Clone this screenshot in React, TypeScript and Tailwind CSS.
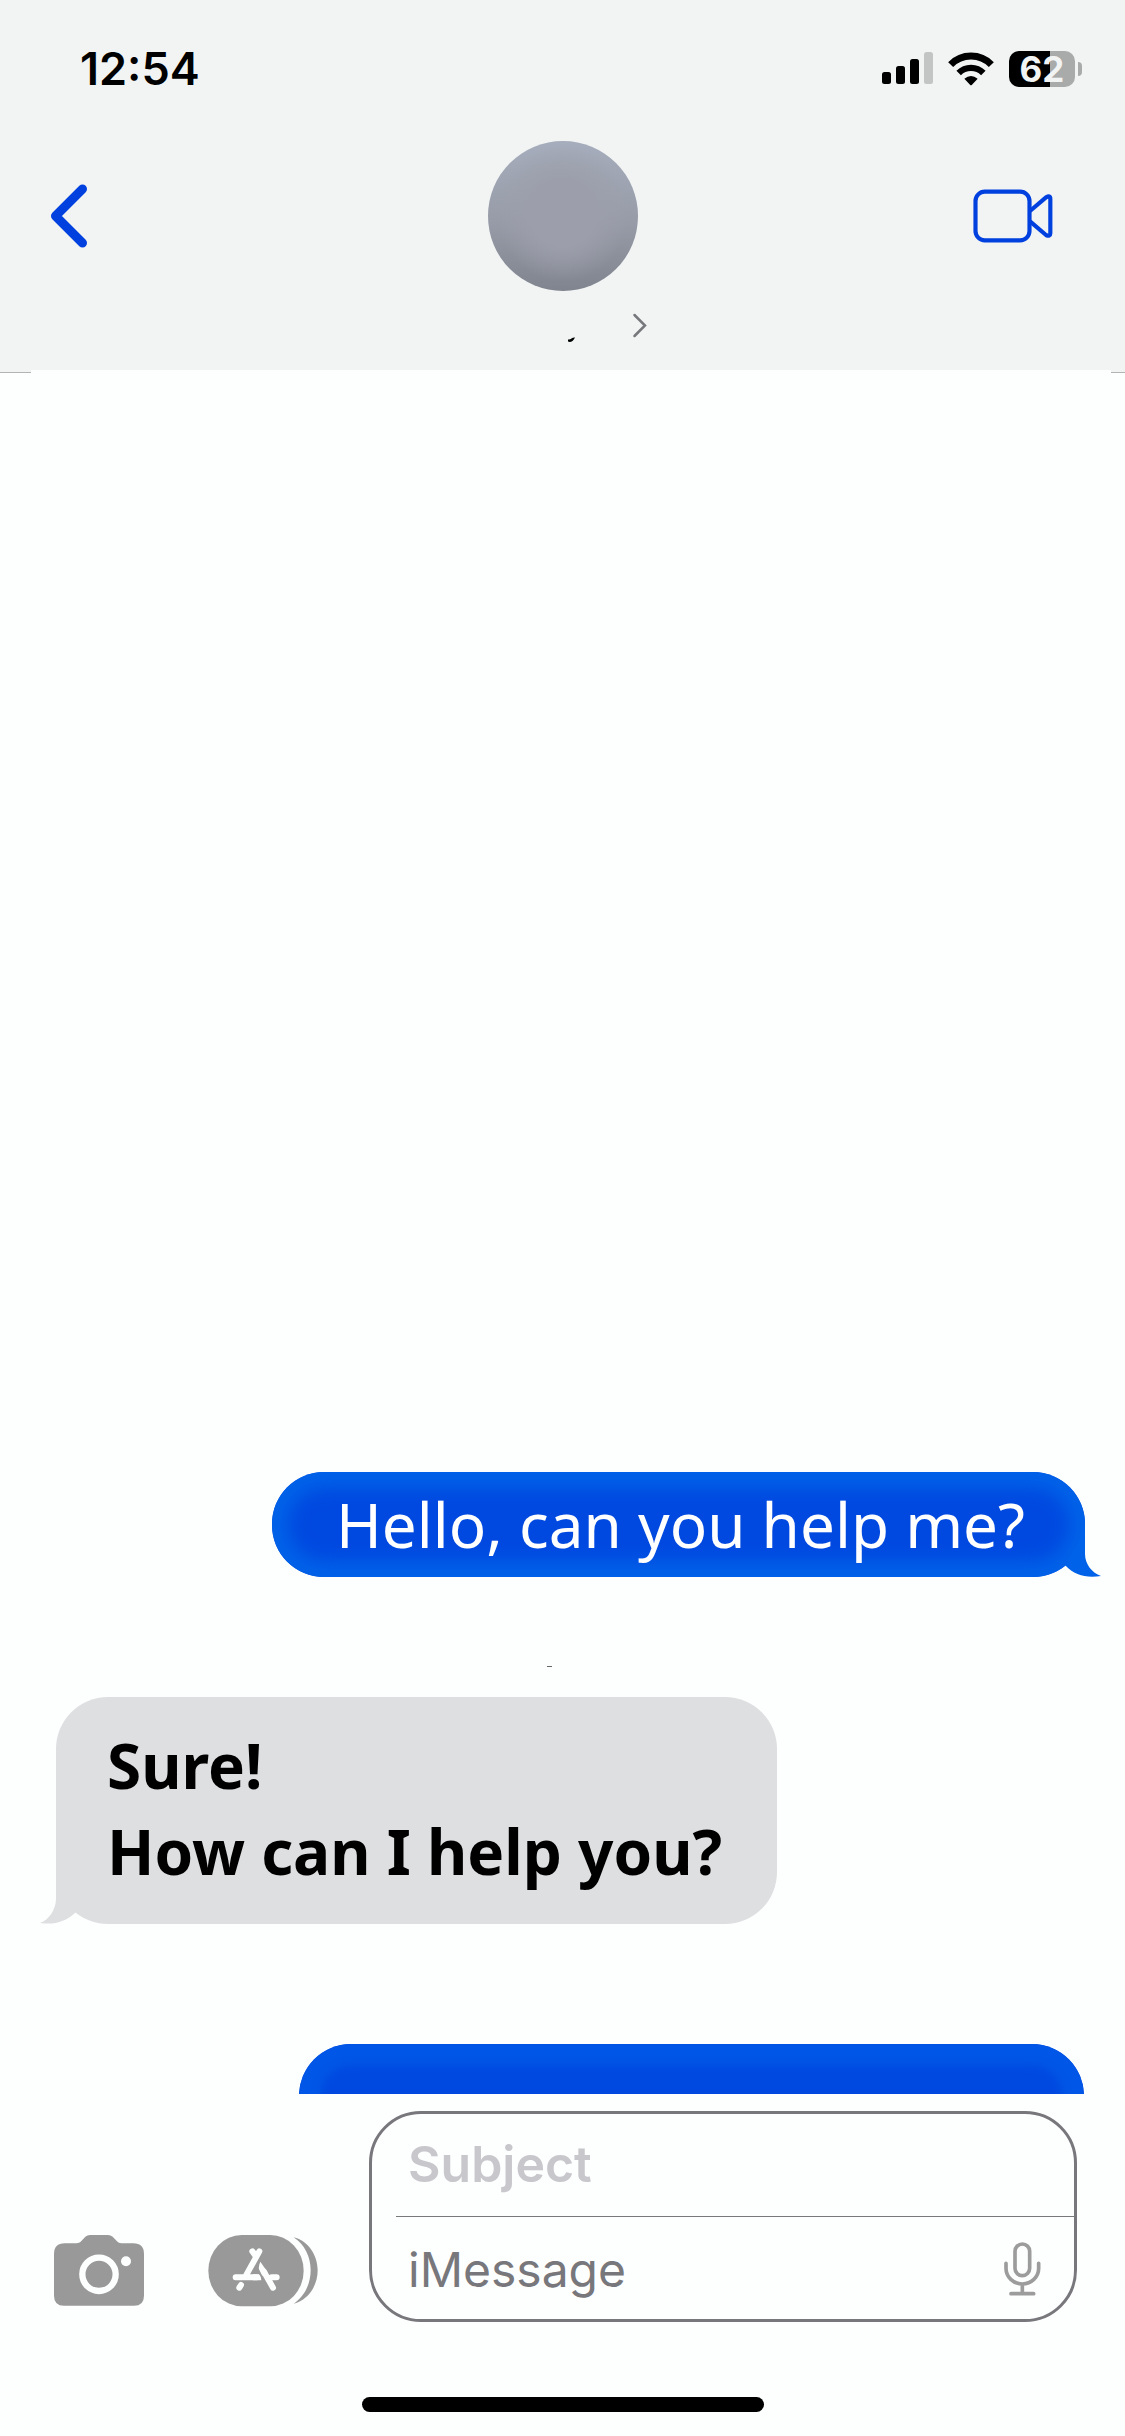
import type { ReactNode } from 'react';

function SignalIcon() {
  return (
    <svg width="51" height="33" viewBox="0 0 51 33" aria-hidden="true">
      <rect x="0" y="20" width="9" height="12" rx="2.5" />
      <rect x="14" y="14" width="9" height="18" rx="2.5" />
      <rect x="28" y="7" width="9" height="25" rx="2.5" />
      <rect x="42" y="0" width="9" height="32" rx="2.5" fill="#c3c4c4" />
    </svg>
  );
}

function WifiIcon() {
  return (
    <svg width="46" height="34" viewBox="324 94 138 102" aria-hidden="true">
      <path d="M332 132A85 85 0 0 1 454 132" fill="none" stroke="#000" strokeWidth="21" />
      <path d="M356 157A52 52 0 0 1 430 157" fill="none" stroke="#000" strokeWidth="19" />
      <path d="M373 174Q393 158 413 174L396 192Q393 196 390 192Z" />
    </svg>
  );
}

function Battery({ level }: { level: number }) {
  return (
    <div className="flex items-center gap-[3px]">
      <div
        className="h-9 w-[66px] rounded-[10px] text-center text-[35px] leading-9 font-bold text-[#f2f4f4]"
        style={{ background: `linear-gradient(to right, #000 ${level}%, #a9aaaa ${level}%)` }}
      >
        {level}
      </div>
      <div className="h-[14px] w-1 rounded-r-full bg-[#a9aaaa]" />
    </div>
  );
}

function BackIcon() {
  return (
    <svg width="38" height="64" viewBox="0 0 38 64" fill="none" stroke="#0040df" strokeWidth="9" strokeLinecap="round" strokeLinejoin="round" aria-hidden="true">
      <path d="M32.500 5L5.500 32L32.500 59" />
    </svg>
  );
}

function VideoIcon() {
  return (
    <svg width="80" height="54" viewBox="398 506 240 162" fill="none" stroke="#0040df" strokeWidth="12.500" strokeLinejoin="round" aria-hidden="true">
      <rect x="405.500" y="514" width="162" height="146" rx="28" />
      <path d="M569 572L617 531Q630 524 630 535V639Q630 650 617 644L569 603" />
    </svg>
  );
}

function CameraIcon() {
  return (
    <svg width="90" height="71" viewBox="102 104 270 213" aria-hidden="true">
      <path
        fill="#999"
        d="M134 129H170Q178 128 182 124L196 109Q202 104 210 104H264Q272 104 278 109L291 123Q296 129 304 129H340Q372 129 372 161V286Q372 316 342 316H132Q102 316 102 286V161Q102 129 134 129Z"
      />
      <circle cx="237" cy="222" r="50" fill="none" stroke="#fdfefe" strokeWidth="19" />
      <circle cx="318" cy="183" r="15" fill="#fdfefe" />
    </svg>
  );
}

function AppsIcon() {
  return (
    <svg width="110" height="72" viewBox="565 104 330 216" aria-hidden="true">
      <path fill="#999" d="M666 104H752A100 107 0 0 1 752 318H666A100 107 0 0 1 666 104Z" />
      <path fill="#999" d="M822 111C866 122 894 165 894 210C894 258 864 300 822 310C855 288 873 250 873 210C873 170 855 132 822 111Z" />
      <g fill="none" stroke="#fdfefe" strokeWidth="18" strokeLinecap="round">
        <path d="M719 153L677 229M698 153L708 167M648 231H712M756 231H771M732 213L760 262M664 254L659 262" />
      </g>
      <path fill="#fdfefe" d="M722 184Q716 198 718 207L728 226L744 216ZM700 222H718Q725 229 725 240H700Z" />
    </svg>
  );
}

function MicIcon() {
  return (
    <svg width="37" height="54" viewBox="909 637 111 162" fill="none" stroke="#9c9c9c" strokeWidth="11" strokeLinecap="round" aria-hidden="true">
      <rect x="942" y="643" width="44" height="95" rx="22" />
      <path d="M915 701V716A49 47 0 0 0 1013 716V701M964 765V792M930 792H998" />
    </svg>
  );
}

function Header() {
  return (
    <header>
      <div className="h-[370px] bg-[#f2f4f4]">
        <div className="flex h-[141px] items-center justify-between pr-[43px] pb-1 pl-20">
          <time className="text-[45px] leading-none font-semibold">12:54</time>
          <div className="flex items-center gap-[15px]">
            <SignalIcon />
            <WifiIcon />
            <Battery level={62} />
          </div>
        </div>
        <div className="grid h-[150px] grid-cols-[1fr_auto_1fr] items-center pr-[72px] pl-[50px]">
          <button type="button" aria-label="Back" className="justify-self-start">
            <BackIcon />
          </button>
          <div className="ml-[22px] size-[150px] rounded-full bg-[radial-gradient(ellipse_at_50%_48%,#9c9fab_30%,transparent_62%),linear-gradient(#a6adbc,#979ba7_55%,#80848e)]" />
          <button type="button" aria-label="Video call" className="justify-self-end">
            <VideoIcon />
          </button>
        </div>
        <button type="button" aria-label="Contact details" className="mx-auto flex w-[168px] items-start justify-end pt-[22px]">
          <svg width="79" height="30" viewBox="0 0 79 30" fill="none" aria-hidden="true">
            <path d="M0 26.500C3 27 4 24 7 24.500C5 29 2 29.500 0 28.500Z" fill="#000" />
            <path d="M66.500 2L77 12.500L66.500 23" stroke="#77787c" strokeWidth="2.500" strokeLinecap="round" />
          </svg>
        </button>
      </div>
      <div className="flex h-[3px] justify-between">
        <div className="w-[31px] border-b border-[#b2b3b3] bg-[#f2f4f4]" />
        <div className="w-[14px] border-b border-[#b2b3b3] bg-[#f2f4f4]" />
      </div>
    </header>
  );
}

function SentBubble({ children }: { children: ReactNode }) {
  return (
    <div className="relative mr-10 self-end rounded-[52px] bg-[#0049e0] pt-[9px] pr-[60px] pb-[10px] pl-16 text-white shadow-[inset_0_0_18px_16px_#0062e8]">
      {children}
      <svg className="absolute right-[-16px] bottom-0" width="52" height="53" viewBox="0 0 52 53" aria-hidden="true">
        <path fill="#0062e8" d="M36 0V30C36 40 43 49 52 52C38 54 26 52 16 41L29 18Z" />
      </svg>
    </div>
  );
}

function ReceivedBubble({ children }: { children: ReactNode }) {
  return (
    <div className="relative ml-14 self-start rounded-[52px] bg-[#dedfe1] pt-[25px] pr-[55px] pb-[30px] pl-[51px] font-bold">
      {children}
      <svg className="absolute bottom-0 left-[-16px]" width="52" height="53" viewBox="0 0 52 53" aria-hidden="true">
        <path fill="#dedfe1" d="M16 0V28C16 38 9 49 0 52C14 54 26 51 36 41L23 18Z" />
      </svg>
    </div>
  );
}

function Composer() {
  return (
    <form className="flex items-end pt-[17px] pr-12 pl-[54px]">
      <button type="button" aria-label="Camera" className="mb-4">
        <CameraIcon />
      </button>
      <button type="button" aria-label="Apps" className="mb-[15px] ml-16">
        <AppsIcon />
      </button>
      <div className="ml-[51px] min-w-0 flex-1 rounded-[52px] border-3 border-[#77777c]">
        <div className="ml-6 border-b border-[#77797a]">
          <input
            type="text"
            aria-label="Subject"
            placeholder="Subject"
            className="block h-[102px] w-full pb-[2px] pl-3 text-[50px] font-semibold outline-none placeholder:text-[#c7c7cc]"
          />
        </div>
        <div className="flex h-[102px] items-center pt-[2px] pr-[33px] pl-9">
          <input
            type="text"
            aria-label="iMessage"
            placeholder="iMessage"
            className="block h-full min-w-0 flex-1 text-[48px] outline-none placeholder:text-[#77777c]"
          />
          <button type="button" aria-label="Dictate">
            <MicIcon />
          </button>
        </div>
      </div>
    </form>
  );
}

export default function App() {
  return (
    <div className="flex min-h-screen flex-col bg-[#fdfefe] font-['Inter',sans-serif] text-black">
      <Header />
      <main className="flex flex-1 flex-col justify-end font-['Noto_Sans',sans-serif] text-[62px] leading-[86px]">
        <SentBubble>Hello, can you help me?</SentBubble>
        <div className="flex h-[120px] justify-center pt-[89px] pr-[26px]">
          <div className="h-px w-[5px] bg-[#666]" />
        </div>
        <ReceivedBubble>
          <p>Sure!</p>
          <p>How can I help you?</p>
        </ReceivedBubble>
        <div className="mt-[120px] mr-[41px] ml-[299px] h-[50px] overflow-hidden">
          <div className="h-[105px] rounded-[52px] bg-[#0049e0] shadow-[inset_0_0_8px_22px_#0056e6]" />
        </div>
      </main>
      <Composer />
      <div className="mx-auto mt-[75px] mb-6 h-[15px] w-[402px] rounded-full bg-black" />
    </div>
  );
}
